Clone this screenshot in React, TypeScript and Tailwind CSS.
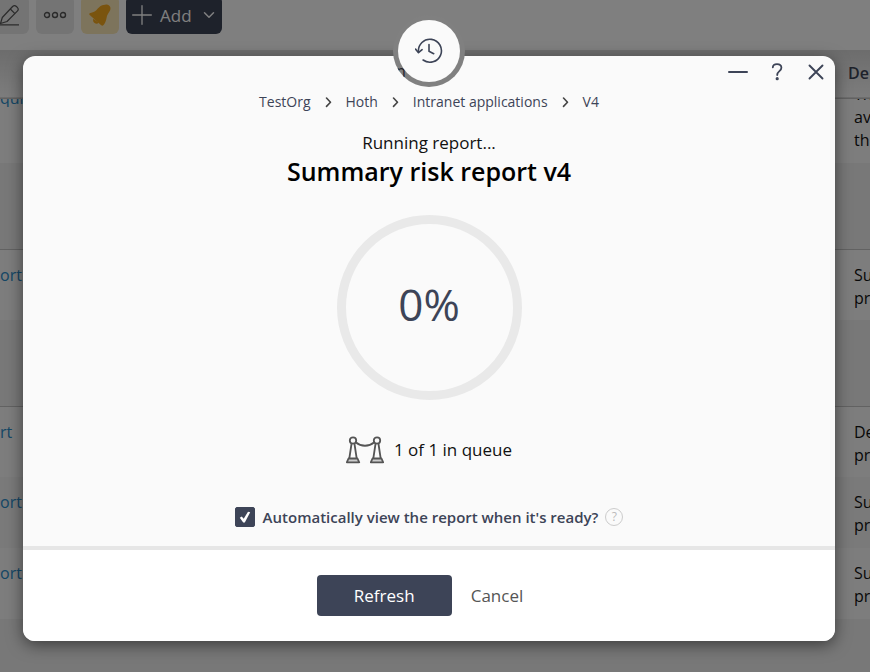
import { ReactNode } from 'react';
import { ChevronDown, ChevronRight, Plus } from 'lucide-react';

const crumbs = ['TestOrg', 'Hoth', 'Intranet applications', 'V4'];

const rows = [
  { link: 'ort', lines: ['Su', 'pr'], groupAbove: true, shaded: false },
  { link: 'rt', lines: ['De', 'pr'], groupAbove: true, shaded: false },
  { link: 'ort', lines: ['Su', 'pr'], groupAbove: false, shaded: true },
  { link: 'ort', lines: ['Su', 'pr'], groupAbove: false, shaded: false },
];

const ToolbarButton = ({ label, className, children }: { label: string; className: string; children: ReactNode }) => (
  <button aria-label={label} className={`flex h-[38px] w-[38px] shrink-0 items-center justify-center rounded-md ${className}`}>
    {children}
  </button>
);

const Toolbar = () => (
  <header className="flex h-[50px] bg-white">
    <div className="-mt-1 -ml-[9px] flex gap-[7px]">
      <ToolbarButton label="Edit" className="bg-[#e9e9e9]">
        <svg viewBox="0 0 24 24" className="h-6 w-6" fill="none" stroke="#555" strokeWidth="1.2" strokeLinejoin="round">
          <path d="M2.500 20.500l1.800-6L14.600 3.500a2.700 2.700 0 0 1 3.800 0l.9.900a2.700 2.700 0 0 1 0 3.800L9 18.500z" />
          <path d="M12.300 6l4.600 4.600M1 21.800h20" />
        </svg>
      </ToolbarButton>
      <ToolbarButton label="More" className="bg-[#e9e9e9]">
        <svg viewBox="0 0 24 8" className="h-2 w-6" fill="none" stroke="#555" strokeWidth="1.400">
          <circle cx="4" cy="4" r="2.500" />
          <circle cx="12" cy="4" r="2.500" />
          <circle cx="20" cy="4" r="2.500" />
        </svg>
      </ToolbarButton>
      <ToolbarButton label="Alerts" className="bg-[#fbe8b8]">
        <svg viewBox="0 0 24 24" className="h-6 w-6" fill="#f5a81c">
          <path d="M17.200 1.800c2-.8 4.300.2 5 2.200.5 1.500.3 3-.6 4.300-1.200 2-2.600 3.800-3 6.400-.4 2.400-1.200 4.500-2.600 6.900-.7 1.200-1.700 1.400-2.800.6L2 12.200c-1.100-.8-.9-2 .4-2.300 2.300-.5 4.300-.9 5.900-2.600 2.300-2.500 4.700-5.600 8.900-5.500z" />
          <path d="M5.300 15.800l5.500 3.900c-1.200 1.300-2.900 1.400-4.200.4-1.300-1-1.900-2.700-1.300-4.300z" />
        </svg>
      </ToolbarButton>
      <button className="flex h-[38px] items-center rounded-md bg-[#3d4457] pr-1 text-[17px] text-white">
        <Plus className="h-8 w-8" strokeWidth={1} />
        <span className="ml-0.5 mr-2 pt-0.5">Add</span>
        <ChevronDown className="h-[18px] w-[18px]" strokeWidth={2} />
      </button>
    </div>
  </header>
);

const ReportsTable = () => (
  <table className="w-full table-fixed border-collapse text-base leading-[23px]">
    <thead>
      <tr className="h-12 border-b border-[#c4c4c4] bg-linear-to-b from-[#dadada] to-[#fafafa]">
        <th className="w-[854px] p-0" />
        <th className="p-0">
          <div className="-ml-1.5 text-left font-semibold text-[#3d4457]">De</div>
        </th>
      </tr>
    </thead>
    <tbody>
      <tr className="h-[65px] bg-[#fafafa] align-top">
        <td className="p-0">
          <div className="h-2 overflow-hidden">
            <a href="#" className="-mt-3 block text-[#2a8dcb]">quir</a>
          </div>
        </td>
        <td className="p-0">
          <div className="h-[54px] overflow-hidden">
            <div className="-mt-4">Th</div>
            <div>av</div>
            <div>th</div>
          </div>
        </td>
      </tr>
      {rows.map((row, i) => [
        row.groupAbove && (
          <tr key={`group-${i}`} className="h-[86px] border-b border-[#c4c4c4] bg-[#f1f1f1]">
            <td colSpan={2} />
          </tr>
        ),
        <tr key={i} className={`h-[71px] align-top ${row.shaded ? 'bg-[#f4f4f4]' : 'bg-[#fafafa]'}`}>
          <td className="p-0 pt-3.5">
            <a href="#" className="text-[#2a8dcb]">{row.link}</a>
          </td>
          <td className="p-0 pt-3.5">
            {row.lines.map((line) => (
              <div key={line}>{line}</div>
            ))}
          </td>
        </tr>,
      ])}
    </tbody>
  </table>
);

const HistoryBadge = () => (
  <div className="absolute -top-[41px] left-1/2 h-[72px] w-[72px] -translate-x-1/2 overflow-hidden rounded-full bg-[#808080]">
    <span className="absolute left-[3px] top-[46px] text-base leading-5 text-[#1f222b]">n</span>
    <div className="absolute inset-[5px] flex items-center justify-center rounded-full bg-[#fafafa]">
      <svg viewBox="0 0 28 28" className="h-7 w-7" fill="none" stroke="#3d4457" strokeWidth="1.600" strokeLinecap="round" strokeLinejoin="round">
        <path d="M3.500 15a11.500 11.500 0 1 1 4.600 8" />
        <path d="M.5 12l3 3.700 3.600-3M14 7.500v6.800l4.700 2.400" />
      </svg>
    </div>
  </div>
);

const WindowControls = () => (
  <div className="absolute right-[7px] top-1 flex items-center gap-[15px] text-[#3d4457]">
    <button aria-label="Minimise" className="flex h-6 w-6 items-center justify-center">
      <span className="h-0.5 w-5 rounded-full bg-[#3d4457]" />
    </button>
    <button aria-label="Help" className="flex h-6 w-6 items-center justify-center">
      <svg viewBox="0 0 12 18" className="h-[18px] w-3" fill="none" stroke="currentColor" strokeWidth="1.800" strokeLinecap="round">
        <path d="M1.800 4.300C2 2.300 3.700 1.200 6 1.200c2.500 0 4.400 1.300 4.400 3.600 0 3.400-4.200 3.300-4.200 7.200" />
        <circle cx="6.200" cy="15.700" r=".7" fill="currentColor" />
      </svg>
    </button>
    <button aria-label="Close" className="flex h-6 w-6 items-center justify-center">
      <svg viewBox="0 0 16 16" className="h-4 w-4" stroke="currentColor" strokeWidth="1.900" strokeLinecap="round">
        <path d="M1.500 1.500l13 13M14.500 1.500l-13 13" />
      </svg>
    </button>
  </div>
);

const QueueIcon = () => (
  <svg viewBox="0 0 38 28" className="h-7 w-[38px]" fill="none" stroke="#555" strokeWidth="1.800" strokeLinejoin="round">
    <circle cx="7" cy="4.500" r="3.200" />
    <circle cx="31" cy="4.500" r="3.200" />
    <path d="M10 6.500c5 4.300 13 4.300 18 0" />
    <path d="M5.500 8L3.300 22.500M8.500 8l2.200 14.500M29.500 8l-2.200 14.500M32.500 8l2.200 14.500" />
    <path fill="#ccc" d="M2.500 22.500h9l1.700 3.800H.8zM26.500 22.500h9l1.700 3.800H24.800z" />
  </svg>
);

const ReportDialog = () => (
  <div role="dialog" aria-labelledby="report-title" className="relative rounded-xl bg-[#fafafa] shadow-[0_4px_16px_rgba(0,0,0,0.5)]">
    <HistoryBadge />
    <WindowControls />

    <div className="flex flex-col items-center pb-[17px] pt-9">
      <nav className="flex items-center gap-3 text-sm font-medium leading-5 text-[#3d4457]">
        {crumbs.map((crumb, i) => (
          <div key={crumb} className="flex items-center gap-3">
            {i > 0 && (
              <svg viewBox="0 0 12 12" className="-mr-px h-3 w-3" fill="none" stroke="#444" strokeWidth="1.600" strokeLinecap="round" strokeLinejoin="round">
                <path d="M3.500 2l4 4.200-4 4.200" />
              </svg>
            )}
            <a href="#">{crumb}</a>
          </div>
        ))}
      </nav>

      <p className="mt-[19px] text-[17px] leading-6 text-[#111]">Running report...</p>
      <h1 id="report-title" className="text-[25px] font-semibold leading-8 text-black">Summary risk report v4</h1>

      <div className="mt-7 flex h-[185px] w-[185px] items-center justify-center rounded-full border-[9px] border-[#e9e9e9] pb-2">
        <span className="text-[44px] leading-none text-[#3d4457]">0%</span>
      </div>

      <div className="mt-9 flex items-center gap-2.5 text-[17px] leading-6 text-[#111]">
        <QueueIcon />
        1 of 1 in queue
      </div>

      <div className="mt-[41px] flex items-center">
        <span className="grid h-5 w-5 place-items-center">
          <input id="auto-view" type="checkbox" defaultChecked className="peer col-start-1 row-start-1 h-5 w-5 appearance-none rounded-xs border border-[#3d4457] checked:bg-[#3d4457]" />
          <svg viewBox="0 0 12 12" className="pointer-events-none invisible col-start-1 row-start-1 h-3 w-3 fill-white peer-checked:visible">
            <path d="M.8 6.800l2-1.400 1.900 2.400L9 .8l2.200.4L5.800 11.400H4.200z" />
          </svg>
        </span>
        <label htmlFor="auto-view" className="ml-2 text-[15px] font-semibold leading-6 text-[#3d4457]">
          Automatically view the report when it's ready?
        </label>
        <button aria-label="About this option" className="ml-[7px] flex h-[18px] w-[18px] items-center justify-center rounded-full border border-[#ccc] text-xs text-[#bbb]">
          ?
        </button>
      </div>
    </div>

    <footer className="flex items-center justify-center gap-[19px] rounded-b-xl border-t-4 border-[#e6e6e6] bg-white py-[25px] pr-[18px]">
      <button className="h-[41px] w-[135px] rounded bg-[#3d4457] text-[17px] text-white">Refresh</button>
      <button className="text-[17px] text-[#555]">Cancel</button>
    </footer>
  </div>
);

const App = () => {
  return (
    <div className="relative h-screen overflow-hidden bg-[#f1f1f1] font-['Open_Sans','Noto_Sans',sans-serif] text-[#111]">
      <Toolbar />
      <ReportsTable />
      <div className="absolute inset-0 bg-black/50 pl-[23px] pr-[35px] pt-14">
        <ReportDialog />
      </div>
    </div>
  );
};

export default App;
